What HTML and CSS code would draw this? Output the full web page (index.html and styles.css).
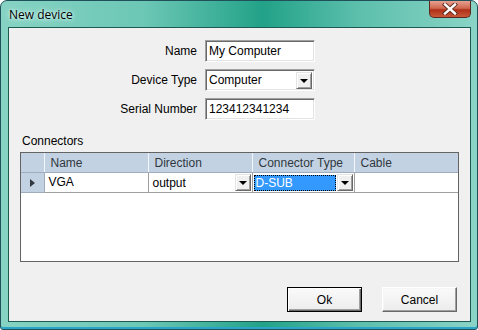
FILE: index.html
```html
<!DOCTYPE html>
<html>
<head>
<meta charset="utf-8">
<link rel="stylesheet" href="styles.css">
</head>
<body>
<div class="window">
  <div class="titlebar">
    <span class="title">New device</span>
    <div class="close"><svg width="20" height="12" viewBox="0 0 20 12"><path d="M5 1.5 L15 10.5 M15 1.5 L5 10.5" stroke="#5a2a20" stroke-width="4.2" stroke-linecap="square"/><path d="M5 1.5 L15 10.5 M15 1.5 L5 10.5" stroke="#ffffff" stroke-width="2.4" stroke-linecap="square"/></svg></div>
  </div>
  <div class="client">
    <div class="form">
      <label class="lbl">Name</label>
      <div class="textbox">My Computer</div>
      <label class="lbl">Device Type</label>
      <div class="combo"><span class="combo-text">Computer</span><span class="dd"><span class="arrow"></span></span></div>
      <label class="lbl">Serial Number</label>
      <div class="textbox">123412341234</div>
    </div>
    <div class="section-label">Connectors</div>
    <div class="grid">
      <table class="table">
        <colgroup><col class="c0"><col class="c1"><col class="c2"><col class="c3"><col></colgroup>
        <thead>
          <tr><th class="rowhead"></th><th>Name</th><th>Direction</th><th>Connector Type</th><th>Cable</th></tr>
        </thead>
        <tbody>
          <tr>
            <td class="rowhead"><span class="pointer"></span></td>
            <td class="cell">VGA</td>
            <td class="cell"><div class="cellcombo"><span class="combo-text">output</span><span class="dd"><span class="arrow"></span></span></div></td>
            <td class="cell"><div class="cellcombo active"><span class="combo-text sel">D-SUB</span><span class="dd"><span class="arrow"></span></span></div></td>
            <td class="cell"></td>
          </tr>
        </tbody>
      </table>
    </div>
    <div class="buttons">
      <button class="btn default">Ok</button>
      <button class="btn">Cancel</button>
    </div>
  </div>
</div>
</body>
</html>
```
FILE: styles.css
```css
html, body { margin: 0; padding: 0; }
body { width: 478px; height: 330px; overflow: hidden; background: #fff; font-family: "Liberation Sans", Arial, sans-serif; font-size: 12px; color: #000; }

.window {
  box-sizing: border-box;
  width: 478px; height: 330px;
  border: 1px solid #20505a;
  border-radius: 7px 7px 3px 3px;
  background: linear-gradient(90deg, #86d3c3 0%, #6cc7b5 30%, #22a288 55%, #5cbfac 75%, #8ad4c6 100%);
  box-shadow: inset 0 -2px 0 #2aa5c8;
  padding: 0 6px 7px 7px;
  display: flex; flex-direction: column;
}
.titlebar {
  height: 26px;
  display: flex; align-items: flex-start; justify-content: space-between;
}
.title {
  font-family: "Open Sans", "DejaVu Sans", sans-serif;
  font-size: 12px;
  margin-top: 5px;
  padding-left: 1px;
  color: #000;
  text-shadow: 0 0 6px #e8fff8, 0 0 3px #e8fff8;
}
.close {
  width: 42px; height: 17px;
  margin-right: 0px;
  border: 1px solid #5a2a22;
  border-top: none;
  border-radius: 0 0 5px 5px;
  background: linear-gradient(#e6a090 0%, #d06850 45%, #b03018 55%, #c85838 100%);
  display: flex; align-items: center; justify-content: center;
  box-sizing: border-box;
}
.client {
  box-sizing: border-box;
  height: 295px;
  background: #f0f0f0;
  border: 1px solid #1c5a52;
  display: flex; flex-direction: column;
  padding-top: 12px;
}
.form {
  display: grid;
  grid-template-columns: 188px 110px;
  column-gap: 8px;
  row-gap: 7px;
}
.lbl { text-align: right; line-height: 22px; }
.textbox, .combo {
  box-sizing: border-box;
  height: 22px;
  background: #fff;
  border: 1px solid;
  border-color: #a0a0a0 #ffffff #ffffff #a0a0a0;
  box-shadow: inset 1px 1px #696969, inset -1px -1px #e3e3e3;
  padding-left: 3px;
  line-height: 20px;
}
.combo { display: flex; align-items: center; justify-content: space-between; padding-right: 2px; }
.combo-text { line-height: 16px; }
.dd {
  box-sizing: border-box;
  width: 16px; height: 17px;
  background: #f0f0f0;
  border: 1px solid;
  border-color: #e3e3e3 #696969 #696969 #e3e3e3;
  box-shadow: inset 1px 1px #fff, inset -1px -1px #a0a0a0;
  display: flex; align-items: center; justify-content: center;
}
.arrow {
  width: 0; height: 0;
  border-left: 4px solid transparent;
  border-right: 4px solid transparent;
  border-top: 4px solid #000;
  margin-top: 1px;
}
.section-label {
  margin: 14px 0 4px 13px;
  line-height: 14px;
}
.grid {
  box-sizing: border-box;
  margin: 0 11px 0 11px;
  height: 110px;
  border: 1px solid #646464;
  background: #fff;
}
.table { border-collapse: collapse; table-layout: fixed; width: 100%; }
.c0 { width: 23px; }
.c1 { width: 104px; }
.c2 { width: 104px; }
.c3 { width: 102px; }
.table th {
  height: 19px;
  background: #c3d2e2;
  font-weight: normal;
  text-align: left;
  padding: 0 0 0 6px;
  border-right: 1px solid #f4f6fa;
  border-left: 1px solid #a0acbc;
  border-bottom: 1px solid #a0acbc;
  color: #303840;
  line-height: 18px;
}
.table th:first-child { border-left: none; }
.table th:last-child { border-right: none; }
.table td {
  height: 19px;
  padding: 0;
  border-right: 1px solid #a0a0a0;
  border-bottom: 1px solid #a0a0a0;
}
.table td.rowhead {
  background: #c3d2e2;
  border-right: 1px solid #a0acbc;
  border-bottom: 1px solid #a0acbc;
  text-align: center;
}
.pointer {
  display: inline-block;
  width: 0; height: 0;
  border-top: 4px solid transparent;
  border-bottom: 4px solid transparent;
  border-left: 5px solid #303840;
  vertical-align: middle;
}
.cell { padding-left: 4px !important; line-height: 19px; }
.table td.cell:last-child { border-right: none; }
.cellcombo {
  display: flex; align-items: center; justify-content: space-between;
  height: 19px;
  padding-right: 1px;
}
.cellcombo.active { padding-left: 0; margin-left: -3px; }
.sel {
  flex: 1;
  background: #3399ff;
  color: #fff;
  outline: 1px dotted #000;
  outline-offset: -1px;
  padding-left: 2px;
  margin: 0 1px 0 0;
  line-height: 16px;
}
.buttons {
  display: flex; justify-content: flex-end;
  gap: 20px;
  margin-top: 25px;
  margin-right: 13px;
}
.btn {
  box-sizing: border-box;
  width: 75px; height: 25px;
  font-family: "Liberation Sans", Arial, sans-serif;
  font-size: 12px;
  color: #000;
  background: linear-gradient(#fafafa, #ececec);
  border: 1px solid;
  border-color: #ffffff #696969 #696969 #ffffff;
  box-shadow: inset -1px -1px #a0a0a0, inset 1px 1px #f6f6f6;
  padding: 0;
}
.btn.default {
  border: 1px solid #000;
  box-shadow: inset 1px 1px #fff, inset -1px -1px #696969, inset -2px -2px #a0a0a0;
}
```
